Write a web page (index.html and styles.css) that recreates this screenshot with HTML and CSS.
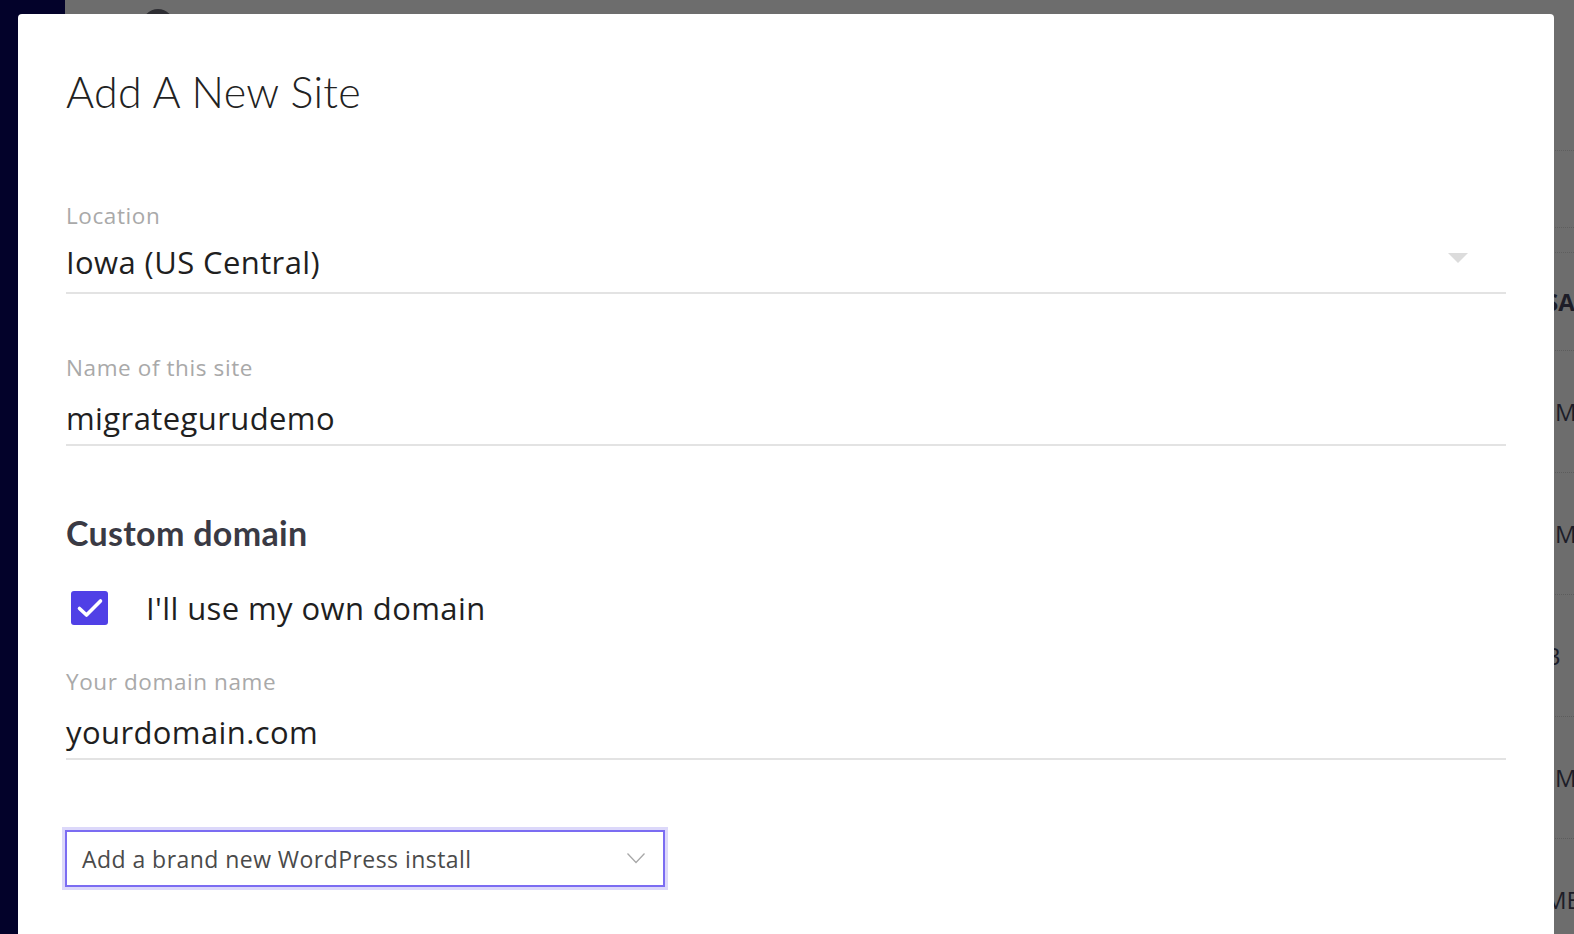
FILE: index.html
```html
<!DOCTYPE html>
<html lang="en">
<head>
<meta charset="utf-8">
<title>Add A New Site</title>
<link rel="stylesheet" href="styles.css">
</head>
<body>
<div class="page">
  <aside class="sidebar"></aside>
  <main class="main">
    <div class="topbar"><span class="avatar"></span></div>
    <div class="list">
      <div class="line-a"></div>
      <div class="line-b"></div>
      <div class="row row-first"><span class="cell strong">SA</span></div>
      <div class="row"><span class="cell">M</span></div>
      <div class="row"><span class="cell">M</span></div>
      <div class="row"><span class="cell shift">B</span></div>
      <div class="row"><span class="cell">M</span></div>
      <div class="row"><span class="cell shift">ME</span></div>
    </div>
  </main>
</div>

<div class="modal">
  <h1 class="title">Add A New Site</h1>

  <div class="field field-first">
    <div class="label">Location</div>
    <div class="value select-value">
      <span>Iowa (US Central)</span>
      <span class="caret"></span>
    </div>
  </div>

  <div class="field field-second">
    <div class="label">Name of this site</div>
    <div class="value text-value">migrategurudemo</div>
  </div>

  <h2 class="section">Custom domain</h2>

  <label class="check-row">
    <span class="checkbox">
      <svg width="28" height="22" viewBox="0 0 28 22"><path d="M3.5 11.5 L10.5 18 L24.5 4" fill="none" stroke="#fff" stroke-width="3.6" stroke-linecap="round" stroke-linejoin="round"/></svg>
    </span>
    <span class="check-text">I'll use my own domain</span>
  </label>

  <div class="field field-third">
    <div class="label">Your domain name</div>
    <div class="value text-value">yourdomain.com</div>
  </div>

  <div class="dropdown">
    <span>Add a brand new WordPress install</span>
    <svg class="chev" width="20" height="12" viewBox="0 0 20 12"><path d="M1.5 1.5 L10 10.5 L18.5 1.5" fill="none" stroke="#a8a8a8" stroke-width="1.3"/></svg>
  </div>
</div>
</body>
</html>
```

FILE: styles.css
```css
* { box-sizing: border-box; }

html, body {
  margin: 0;
  padding: 0;
  height: 100%;
  overflow: hidden;
}

body {
  background: #6d6d6d;
  font-family: "Open Sans", "Liberation Sans", sans-serif;
}

.page {
  display: flex;
  height: 934px;
  overflow: hidden;
}

.sidebar {
  width: 65px;
  flex: 0 0 65px;
  background: #03022a;
}

.main {
  flex: 1;
  display: flex;
  flex-direction: column;
  overflow: hidden;
  background: #6d6d6d;
}

.main > * {
  flex-shrink: 0;
}

.topbar {
  height: 150px;
  padding-left: 77px;
}

.avatar {
  display: block;
  width: 32px;
  height: 32px;
  margin-top: 9px;
  border-radius: 50%;
  background: #2e2e33;
}

.list {
  display: flex;
  flex-direction: column;
}

.list > * {
  flex-shrink: 0;
}

.line-a {
  height: 23px;
  border-top: 1px dotted #5e5e5e;
}

.line-b {
  margin-top: 54px;
  height: 26px;
  border-top: 1px dotted #5e5e5e;
  border-bottom: 1px dotted #5e5e5e;
}

.row {
  height: 122px;
  border-bottom: 1px dotted #5c5c5c;
  display: flex;
  align-items: center;
  padding-left: 1490px;
  font-size: 24px;
  color: #1d1d28;
}

.row-first {
  height: 98px;
}

.cell.strong {
  font-weight: 700;
  margin-left: -10px;
}

.cell.shift {
  margin-left: -10px;
}

/* Modal dialog overlaying the page */
.modal {
  position: absolute;
  left: 18px;
  top: 14px;
  width: 1536px;
  height: 940px;
  background: #fff;
  border-radius: 4px 4px 0 0;
  padding: 53px 48px 0 48px;
}

.title {
  margin: 0;
  font-family: Lato, "Liberation Sans", sans-serif;
  font-weight: 300;
  font-size: 43px;
  line-height: 50px;
  color: #222;
  letter-spacing: 0.3px;
}

.field {
  width: 1440px;
}

.field-first { margin-top: 84px; }
.field-second { margin-top: 59px; }
.field-third { margin-top: 39px; }

.label {
  font-size: 22.5px;
  line-height: 30px;
  letter-spacing: 0.6px;
  color: #a9a9a9;
}

.value {
  margin-top: 10px;
  font-size: 31px;
  line-height: 42px;
  letter-spacing: 0.4px;
  color: #1f1f1f;
  padding-bottom: 9px;
  border-bottom: 2px solid #e3e3e3;
}

.text-value {
  margin-top: 14px;
  padding-bottom: 5px;
}

.select-value {
  display: flex;
  justify-content: space-between;
  align-items: center;
}

.caret {
  width: 0;
  height: 0;
  margin-right: 38px;
  margin-bottom: 8px;
  border-left: 10px solid transparent;
  border-right: 10px solid transparent;
  border-top: 10px solid #dcdcdc;
}

.section {
  margin: 67px 0 0 0;
  font-family: Lato, "Liberation Sans", sans-serif;
  font-weight: 700;
  font-size: 34px;
  line-height: 40px;
  letter-spacing: 0.3px;
  color: #3a3a44;
}

.check-row {
  display: flex;
  align-items: center;
  margin-top: 35px;
  height: 40px;
}

.checkbox {
  width: 37px;
  height: 34px;
  margin-left: 5px;
  border-radius: 3px;
  background: #5040e6;
  display: flex;
  align-items: center;
  justify-content: center;
}

.check-text {
  margin-left: 38px;
  font-size: 31px;
  line-height: 40px;
  letter-spacing: 0.4px;
  color: #1f1f1f;
}

.dropdown {
  margin-top: 70px;
  margin-left: -1px;
  width: 600px;
  height: 57px;
  border: 2px solid #7b6cf2;
  box-shadow: 0 0 0 3px #dcd8fa;
  display: flex;
  align-items: center;
  justify-content: space-between;
  padding: 0 17px 0 15px;
  font-size: 23px;
  letter-spacing: 0.45px;
  color: #4a4a4a;
}

.chev {
  margin-top: -2px;
}
```
